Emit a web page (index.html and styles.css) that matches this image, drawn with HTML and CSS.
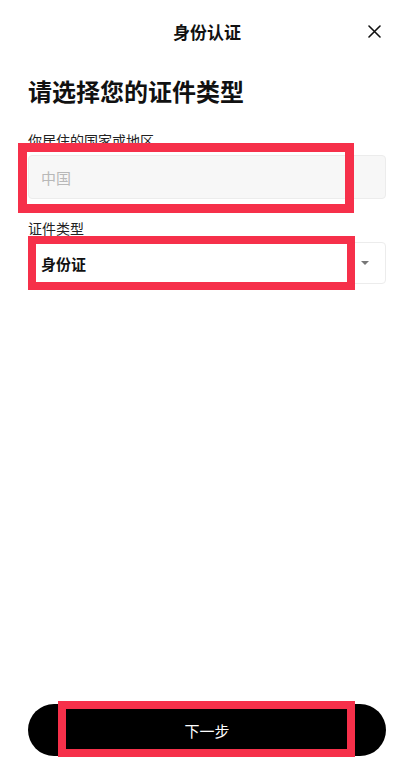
FILE: index.html
```html
<!DOCTYPE html>
<html lang="zh-CN">
<head>
  <meta charset="UTF-8">
  <title>身份认证</title>
  <meta name="viewport" content="width=device-width, initial-scale=1.0">
  <link rel="stylesheet" href="styles.css">
</head>
<body>

<div class="page">
  <div class="header">
    <span></span>
    <div class="title">身份认证</div>
    <div class="close">
      <svg width="13" height="13" viewBox="0 0 13 13">
        <path d="M1 1 L12 12 M12 1 L1 12" stroke="#111" stroke-width="1.6" fill="none" stroke-linecap="round"/>
      </svg>
    </div>
  </div>

  <div class="content">
    <h1 class="heading">请选择您的证件类型</h1>

    <div class="label">你居住的国家或地区</div>
    <div class="field field-disabled">
      <span class="placeholder">中国</span>
      <div class="mark mark-country"></div>
    </div>

    <div class="label label-type">证件类型</div>
    <div class="field field-select">
      <span class="value">身份证</span>
      <span class="arrow"></span>
      <div class="mark mark-type"></div>
    </div>
  </div>

  <div class="footer">
    <div class="next-button">
      下一步
      <div class="mark mark-next"></div>
    </div>
  </div>
</div>

</body>
</html>
```

FILE: styles.css
```css
html, body {
  margin: 0;
  padding: 0;
  height: 100%;
  background: #fff;
}

body {
  font-family: "Noto Sans CJK SC", "Noto Sans", sans-serif;
  color: #111;
}

.page {
  height: 100%;
  display: flex;
  flex-direction: column;
  box-sizing: border-box;
  padding: 0 32px 0 28px;
}

.header {
  height: 62px;
  display: grid;
  grid-template-columns: 1fr auto 1fr;
  align-items: center;
}

.title {
  font-size: 17px;
  font-weight: bold;
}

.close {
  justify-self: end;
  display: flex;
  margin-right: 5px;
}

.content {
  flex: 1;
}

.heading {
  margin: 14px 0 0 0;
  font-size: 24px;
  line-height: 29px;
  font-weight: bold;
}

.label {
  margin-top: 25px;
  font-size: 14px;
  line-height: 20px;
  color: #222;
}

.label-type {
  margin-top: 19px;
}

.field {
  position: relative;
  display: flex;
  align-items: center;
  box-sizing: border-box;
  border: 1px solid #ececec;
  border-radius: 4px;
  padding: 0 12px;
  font-size: 15px;
}

.field-disabled {
  margin-top: 5px;
  height: 44px;
  background: #f7f7f7;
}

.field-select {
  margin-top: 4px;
  height: 42px;
  justify-content: space-between;
}

.placeholder {
  color: #b8b8b8;
}

.value {
  font-weight: bold;
}

.arrow {
  width: 0;
  height: 0;
  border-left: 4px solid transparent;
  border-right: 4px solid transparent;
  border-top: 4px solid #777;
  margin-right: 4px;
}

/* highlight frames drawn over the controls */
.mark {
  position: absolute;
  border: 9px solid #f6304a;
  pointer-events: none;
}

.mark-country {
  left: -11px;
  top: -13px;
  right: 31px;
  bottom: -15px;
}

.mark-type {
  left: -1px;
  top: -7px;
  right: 30px;
  bottom: -7px;
  border-width: 8px;
}

.mark-next {
  left: 30px;
  top: -3px;
  right: 31px;
  bottom: -1px;
  border-width: 8px;
}

.footer {
  padding-bottom: 10px;
}

.next-button {
  position: relative;
  height: 52px;
  border-radius: 26px;
  background: #000;
  color: #fff;
  font-size: 15px;
  display: flex;
  align-items: center;
  justify-content: center;
}
```
